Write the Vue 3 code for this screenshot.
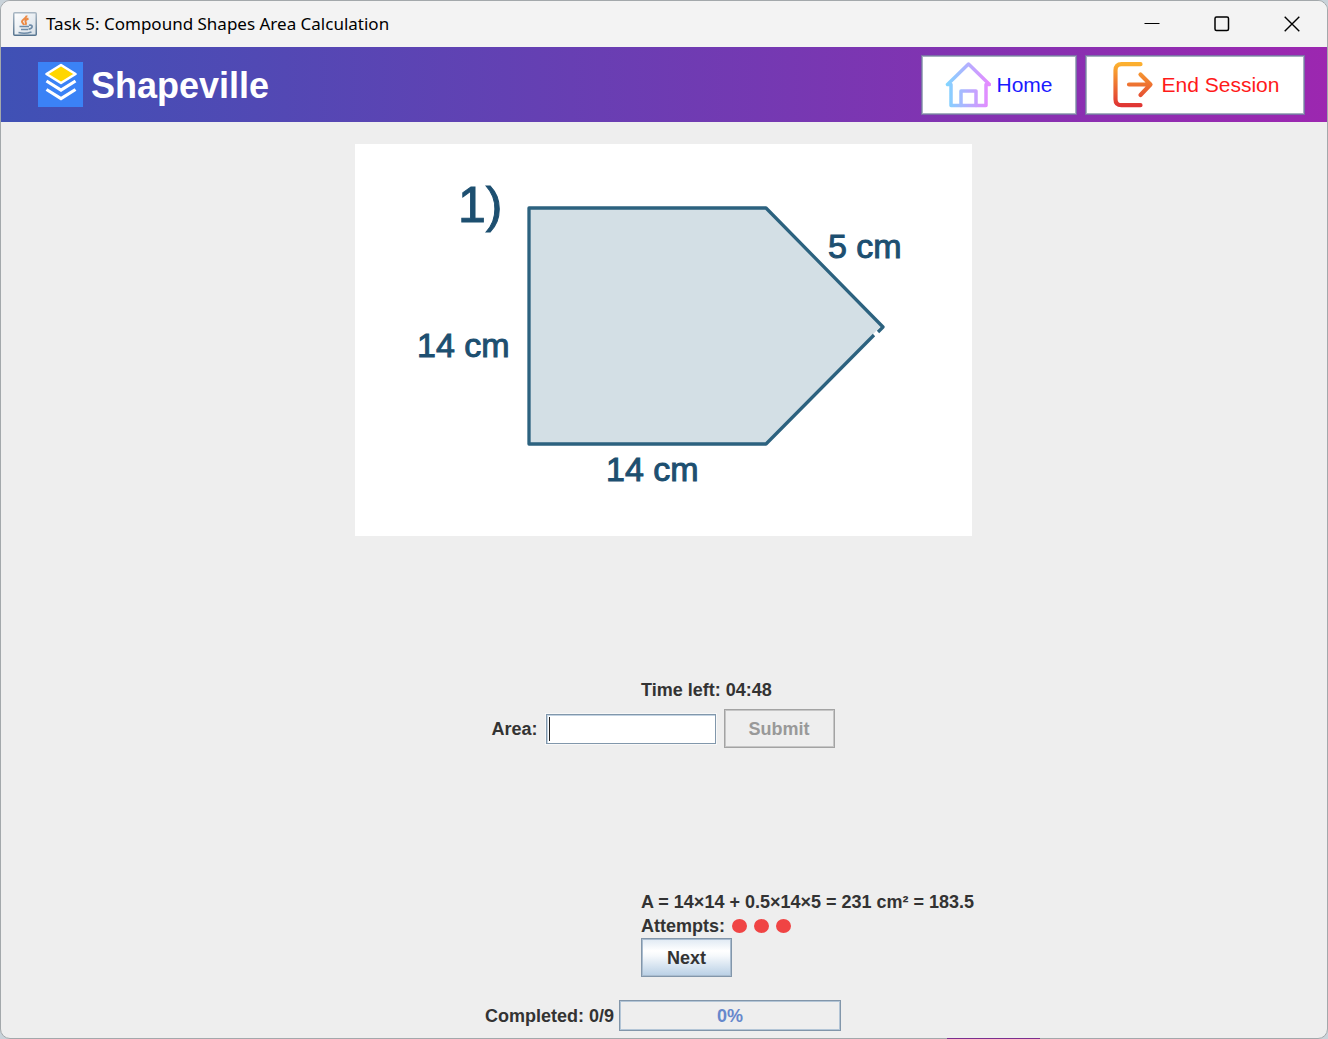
<script setup>
import { ref, computed } from 'vue'

const area = ref('')
const completed = ref(0)
const total = 9
const attempts = 3
const percent = computed(() => Math.round((completed.value / total) * 100))
</script>

<template>
  <div class="window">
    <header class="titlebar">
      <svg class="java" width="24" height="24" viewBox="0 0 24 24" fill="none" aria-hidden="true">
        <defs>
          <linearGradient id="cupBg" x1="0" y1="0" x2="1" y2="1">
            <stop offset="0" stop-color="#ffffff" />
            <stop offset="1" stop-color="#d5dee6" />
          </linearGradient>
          <linearGradient id="cupFrame" x1="0" y1="0" x2="0" y2="1">
            <stop offset="0" stop-color="#a9b7c3" />
            <stop offset="1" stop-color="#56748f" />
          </linearGradient>
        </defs>
        <rect x="0.750" y="0.750" width="22.500" height="22.500" rx="1" fill="url(#cupBg)" stroke="url(#cupFrame)" stroke-width="1.500" />
        <path d="M13.500 3.500c.5 2.500-4.500 4-4.500 6 0 1.500 1.500 2 2 3.500M15.500 6.500c-2.500 1-3.500 2-3 3.200s1 1.800 0 3.300" stroke="#ec8a45" stroke-width="2" />
        <path d="M6.500 14.500H16M8 17.500h7M16 13.300c4-1 4.500 2.700-.5 4M5.500 20.500c3 .8 9 .8 13-.5" stroke="#6f8ca8" stroke-width="1.700" />
      </svg>
      <h1 class="title">Task 5: Compound Shapes Area Calculation</h1>
      <div class="controls">
        <button type="button" aria-label="Minimize">
          <svg width="16" height="16" viewBox="0 0 16 16" stroke="#000" fill="none"><path d="M0.500 7.500h15" /></svg>
        </button>
        <button type="button" aria-label="Maximize">
          <svg width="16" height="16" viewBox="0 0 16 16" stroke="#000" stroke-width="1.500" fill="none"><rect x="1" y="1" width="13.500" height="13.500" rx="1.500" /></svg>
        </button>
        <button type="button" aria-label="Close">
          <svg width="16" height="16" viewBox="0 0 16 16" stroke="#000" stroke-width="1.400" fill="none"><path d="M.7.7l14.600 14.600M15.300.7L.7 15.300" /></svg>
        </button>
      </div>
    </header>

    <nav class="banner">
      <svg width="45" height="45" viewBox="0 0 45 45" aria-hidden="true">
        <rect width="45" height="45" fill="#3b82f6" />
        <path d="M23 3L37.500 12 23 21 8.500 12z" fill="#ffd600" stroke="#fff" stroke-width="2.600" stroke-linejoin="round" />
        <path d="M8.500 19L23 28l14.500-9M8.500 27.500L23 36.500l14.500-9" fill="none" stroke="#fff" stroke-width="3.200" />
      </svg>
      <span class="brand">Shapeville</span>
      <button type="button" class="nav-btn home">
        <svg width="46" height="46" viewBox="0 0 46 46" fill="none" aria-hidden="true">
          <defs>
            <linearGradient id="homeStroke" gradientUnits="userSpaceOnUse" x1="2" y1="23" x2="44" y2="23">
              <stop offset="0" stop-color="#82d4ff" />
              <stop offset="1" stop-color="#e689ff" />
            </linearGradient>
          </defs>
          <g stroke="url(#homeStroke)" stroke-width="3.500" stroke-linecap="round" stroke-linejoin="round">
            <path d="M2.500 22.500H6v21h35v-21h3.500L23.500 2z" />
            <path d="M16 43.500V29h15v14.500" />
          </g>
        </svg>
        Home
      </button>
      <button type="button" class="nav-btn end">
        <svg width="46" height="46" viewBox="0 0 46 46" fill="none" aria-hidden="true">
          <defs>
            <linearGradient id="exitStroke" gradientUnits="userSpaceOnUse" x1="0" y1="2" x2="0" y2="44">
              <stop offset="0" stop-color="#fcb02f" />
              <stop offset="1" stop-color="#df3434" />
            </linearGradient>
          </defs>
          <g stroke="url(#exitStroke)" stroke-width="4.200" stroke-linecap="round" stroke-linejoin="round">
            <path d="M29.500 2.200H10.500Q4.500 2.200 4.500 8.200v29q0 6 6 6h19" />
            <path d="M18 22.500l21 .01M29.500 12.500L39.500 22.500 29.500 33" />
          </g>
        </svg>
        End Session
      </button>
    </nav>

    <main class="task">
      <figure class="figure">
        <svg viewBox="0 0 617 392" role="img" aria-label="Compound shape">
          <path d="M174 64H411L526 182 411 300H174z" fill="#d3dfe5" />
          <path d="M519 191L411 300H174V64H411L528 183l-5 5" fill="none" stroke="#2c627f" stroke-width="3.300" stroke-linejoin="round" />
          <g class="labels">
            <text x="103" y="78" class="number">1)</text>
            <text x="473" y="114">5 cm</text>
            <text x="62" y="213">14 cm</text>
            <text x="251" y="337">14 cm</text>
          </g>
        </svg>
      </figure>

      <p class="readout timer">Time left: 04:48</p>

      <form class="answer" @submit.prevent>
        <label for="area">Area:</label>
        <span class="field"><input id="area" v-model="area" type="text" autocomplete="off" /></span>
        <button type="submit" class="submit" disabled>Submit</button>
      </form>

      <section class="readout result">
        <p>A = 14×14 + 0.5×14×5 = 231 cm² = 183.5</p>
        <p class="attempts">Attempts: <i v-for="n in attempts" :key="n" class="dot"></i></p>
        <button type="button" class="next">Next</button>
      </section>

      <footer class="progress-row">
        <span id="done">Completed: {{ completed }}/{{ total }}</span>
        <div class="bar" role="progressbar" aria-labelledby="done" :aria-valuenow="percent" aria-valuemin="0" aria-valuemax="100">
          <div class="fill" :style="{ width: percent + '%' }"></div>
          <span class="percent">{{ percent }}%</span>
        </div>
      </footer>
    </main>
  </div>
</template>

<style>
body {
  background: #c9d3da;
}
</style>

<style scoped>
.window {
  position: relative;
  box-sizing: border-box;
  display: flex;
  flex-direction: column;
  min-height: 100vh;
  border: 1px solid #a3a8ab;
  border-radius: 10px;
  background: #eee;
  color: #333;
  font: bold 18px/24px "Liberation Sans", Arial, sans-serif;
}

/* Coloured edge of the window behind */
.window::after {
  content: "";
  position: absolute;
  right: 287px;
  bottom: -1px;
  width: 93px;
  height: 1px;
  background: #7b2f8f;
}

p,
h1,
figure {
  margin: 0;
}

button {
  box-sizing: border-box;
  padding: 0;
  font: inherit;
}

.titlebar {
  display: flex;
  align-items: center;
  height: 46px;
  padding-left: 12px;
  border-radius: 9px 9px 0 0;
  background: #f3f3f3;
}

.title {
  flex: 1;
  margin-left: 9px;
  color: #000;
  font: 17px/24px "Noto Sans", "Open Sans", sans-serif;
}

.controls {
  display: flex;
}

.controls button {
  display: grid;
  place-items: center;
  width: 70px;
  height: 46px;
  border: 0;
  background: none;
}

.banner {
  display: flex;
  align-items: center;
  gap: 8px;
  height: 75px;
  padding: 0 22px 0 37px;
  background: linear-gradient(to right, #3f51b5, #9c27b0);
}

.brand {
  flex: 1;
  padding-top: 2px;
  color: #fff;
  font-size: 36px;
  line-height: 44px;
}

.nav-btn {
  display: flex;
  align-items: center;
  justify-content: center;
  gap: 5px;
  height: 60px;
  border: 1px solid #7b6fa8;
  background: #fff;
  box-shadow: inset 0 0 0 1px #a5b0bf;
  font-weight: normal;
  font-size: 21px;
}

.home {
  width: 156px;
  color: #1a1aff;
}

.end {
  width: 220px;
  color: #ff1a1a;
}

.task {
  display: flex;
  flex-direction: column;
  align-items: center;
  padding: 22px 2px 6px 0;
}

.figure {
  width: 100%;
  max-width: 617px;
  background: #fff;
}

.figure svg {
  display: block;
  width: 100%;
}

.labels {
  fill: #1d4f70;
  stroke: #1d4f70;
  font-weight: normal;
  font-size: 34px;
}

.number {
  font-size: 50px;
}

.readout {
  align-self: flex-start;
  margin-left: calc(50% - 22px);
}

.timer {
  margin-top: 142px;
}

.answer {
  display: flex;
  align-items: center;
  gap: 8px;
  margin-top: 7px;
}

.field {
  position: relative;
  display: flex;
}

.field::after {
  content: "";
  position: absolute;
  top: 3px;
  left: 3px;
  width: 1px;
  height: 24px;
  background: #222;
}

.field input {
  box-sizing: border-box;
  width: 170px;
  height: 30px;
  padding: 0 6px;
  border: 1px solid #8197ab;
  outline: 1px solid #f8f8f8;
  background: #fff;
  box-shadow: inset 1px 1px #c3d3e2;
  font: inherit;
}

.submit {
  width: 111px;
  height: 39px;
  border: 1px solid #a3a3a3;
  background: #eee;
  box-shadow: inset 0 0 0 1px #c6c6c6;
  color: #999;
}

.result {
  margin-top: 142px;
}

.attempts {
  display: flex;
  align-items: center;
  gap: 7px;
}

.dot {
  width: 15px;
  height: 14px;
  border-radius: 50%;
  background: #f04444;
}

.next {
  display: block;
  width: 91px;
  height: 39px;
  border: 1px solid #8296aa;
  background: linear-gradient(#dfe9f3, #fff 32%, #f6f9fc 45%, #b8cfe5);
  box-shadow: inset 0 0 0 1px #a9bccf;
  color: #333;
}

.progress-row {
  display: flex;
  align-items: center;
  gap: 5px;
  margin-top: 23px;
}

.bar {
  position: relative;
  box-sizing: border-box;
  width: 222px;
  height: 31px;
  border: 1px solid #8296aa;
  box-shadow: inset 0 0 0 1px #b3c5d6;
}

.fill {
  height: 100%;
  background: #a3b8cc;
}

.percent {
  position: absolute;
  inset: 0;
  display: grid;
  place-items: center;
  color: #6688cc;
}
</style>
